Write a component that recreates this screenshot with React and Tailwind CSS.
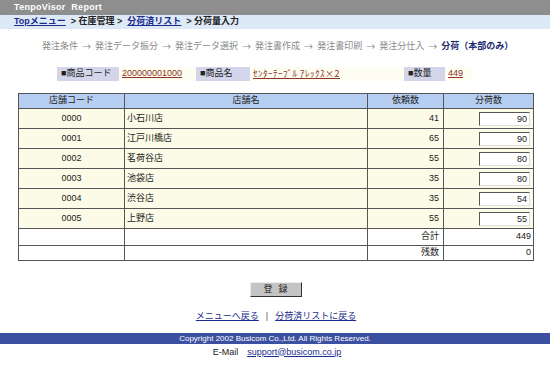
import React from 'react';

const steps = ['発注条件', '発注データ振分', '発注データ選択', '発注書作成', '発注書印刷', '発注分仕入'];

const rows = [
    { code: '0000', name: '小石川店', req: 41, qty: 90 },
    { code: '0001', name: '江戸川橋店', req: 65, qty: 90 },
    { code: '0002', name: '茗荷谷店', req: 55, qty: 80 },
    { code: '0003', name: '池袋店', req: 35, qty: 80 },
    { code: '0004', name: '渋谷店', req: 35, qty: 54 },
    { code: '0005', name: '上野店', req: 55, qty: 55 },
];

const font = { fontFamily: '"Liberation Sans", "Noto Sans CJK JP", sans-serif' };
const cjk = { fontFamily: '"Noto Sans CJK JP", sans-serif' };

const App = () => {
    return (
        <div className="w-[550px] h-[373px] bg-white text-[9px] text-[#222] overflow-hidden" style={font}>
            {/* Title bar */}
            <div className="h-[15px] bg-[#8e8e8e] text-white font-bold text-[9px] leading-[15px] pl-[14px] tracking-[0.3px]">TenpoVisor&nbsp; Report</div>

            {/* Breadcrumb */}
            <div className="h-[14px] bg-[#dde9f6] flex items-center pl-[14px] gap-[5px] text-[9px]">
                <a className="font-bold text-[#1a2c8c] underline">Topメニュー</a>
                <span className="font-bold">&gt; 在庫管理 &gt;</span>
                <a className="font-bold text-[#1a2c8c] underline">分荷済リスト</a>
                <span className="font-bold">&gt; 分荷量入力</span>
            </div>

            {/* Steps */}
            <div className="mt-[11px] h-[14px] flex items-center pl-[42px] text-[#8a8a8a] text-[9px]">
                {steps.map((s) => (
                    <React.Fragment key={s}>
                        <span>{s}</span>
                        <span className="mx-[4px]" style={cjk}>→</span>
                    </React.Fragment>
                ))}
                <span className="font-bold text-[#1b2a70]">分荷（本部のみ）</span>
            </div>

            {/* Product info */}
            <div className="mt-[13px] ml-[57px] w-[415px] h-[14px] flex items-center bg-[#fdfdf1] text-[9px]">
                <span className="w-[62px] h-full bg-[#d3d6ea] flex items-center pl-[4px]">■商品コード</span>
                <a className="ml-[3px] w-[74px] text-[#8b3324] underline">200000001000</a>
                <span className="w-[54px] h-full bg-[#d3d6ea] flex items-center pl-[4px]">■商品名</span>
                <a className="ml-[3px] w-[151px] text-[#8b3324] underline tracking-[0.5px]" style={cjk}>ｾﾝﾀｰﾃｰﾌﾞﾙ ｱﾚｯｸｽ×2</a>
                <span className="w-[41px] h-full bg-[#d3d6ea] flex items-center pl-[4px]">■数量</span>
                <a className="ml-[3px] text-[#8b3324] underline">449</a>
            </div>

            {/* Table */}
            <table className="mt-[12px] ml-[18px] w-[516px] border-collapse border border-[#333] text-[9px] table-fixed">
                <thead>
                    <tr className="bg-[#b6cef1] h-[15px]">
                        <th className="w-[106px] border border-[#555] font-normal text-center">店舗コード</th>
                        <th className="w-[243px] border border-[#555] font-normal text-center">店舗名</th>
                        <th className="w-[76px] border border-[#555] font-normal text-center">依頼数</th>
                        <th className="border border-[#555] font-normal text-center">分荷数</th>
                    </tr>
                </thead>
                <tbody>
                    {rows.map((r) => (
                        <tr key={r.code} className="bg-[#fbfbe7] h-[20px]">
                            <td className="border border-[#555] text-center">{r.code}</td>
                            <td className="border border-[#555] pl-[2px]">{r.name}</td>
                            <td className="border border-[#555] text-right pr-[4px]">{r.req}</td>
                            <td className="border border-[#555] pl-[35px] pr-[3px]">
                                <div className="h-[14px] bg-white border border-t-[#555] border-l-[#555] border-b-[#ddd] border-r-[#ddd] text-right pr-[2px] leading-[12px]">{r.qty}</div>
                            </td>
                        </tr>
                    ))}
                    <tr className="bg-white h-[17px]">
                        <td className="border border-[#555]"></td>
                        <td className="border border-[#555]"></td>
                        <td className="border border-[#555] text-right pr-[4px]">合計</td>
                        <td className="border border-[#555] text-right pr-[2px]">449</td>
                    </tr>
                    <tr className="bg-white h-[15px]">
                        <td className="border border-[#555]"></td>
                        <td className="border border-[#555]"></td>
                        <td className="border border-[#555] text-right pr-[4px]">残数</td>
                        <td className="border border-[#555] text-right pr-[2px]">0</td>
                    </tr>
                </tbody>
            </table>

            {/* Submit */}
            <div className="mt-[21px] flex justify-center">
                <button className="ml-[1px] w-[52px] h-[15px] bg-[#c4c4c4] border border-t-[#eee] border-l-[#eee] border-b-[#333] border-r-[#333] text-[9px] leading-[13px] tracking-[6px] pl-[6px]">登録</button>
            </div>

            {/* Links */}
            <div className="mt-[13px] flex justify-center items-center gap-[7px] text-[9px] pl-[2px]">
                <a className="text-[#1a2c8c] underline">メニューへ戻る</a>
                <span className="text-[#555]">|</span>
                <a className="text-[#1a2c8c] underline">分荷済リストに戻る</a>
            </div>

            {/* Footer */}
            <div className="mt-[9px] h-[11px] bg-[#3b50a0] text-white text-[8px] leading-[11px] text-center">Copyright 2002 Busicom Co.,Ltd. All Rights Reserved.</div>
            <div className="mt-[2px] flex justify-center gap-[9px] text-[9px] pl-[4px]">
                <span>E-Mail</span>
                <a className="text-[#1a2c8c] underline">support@busicom.co.jp</a>
            </div>
        </div>
    );
};

export default App;
